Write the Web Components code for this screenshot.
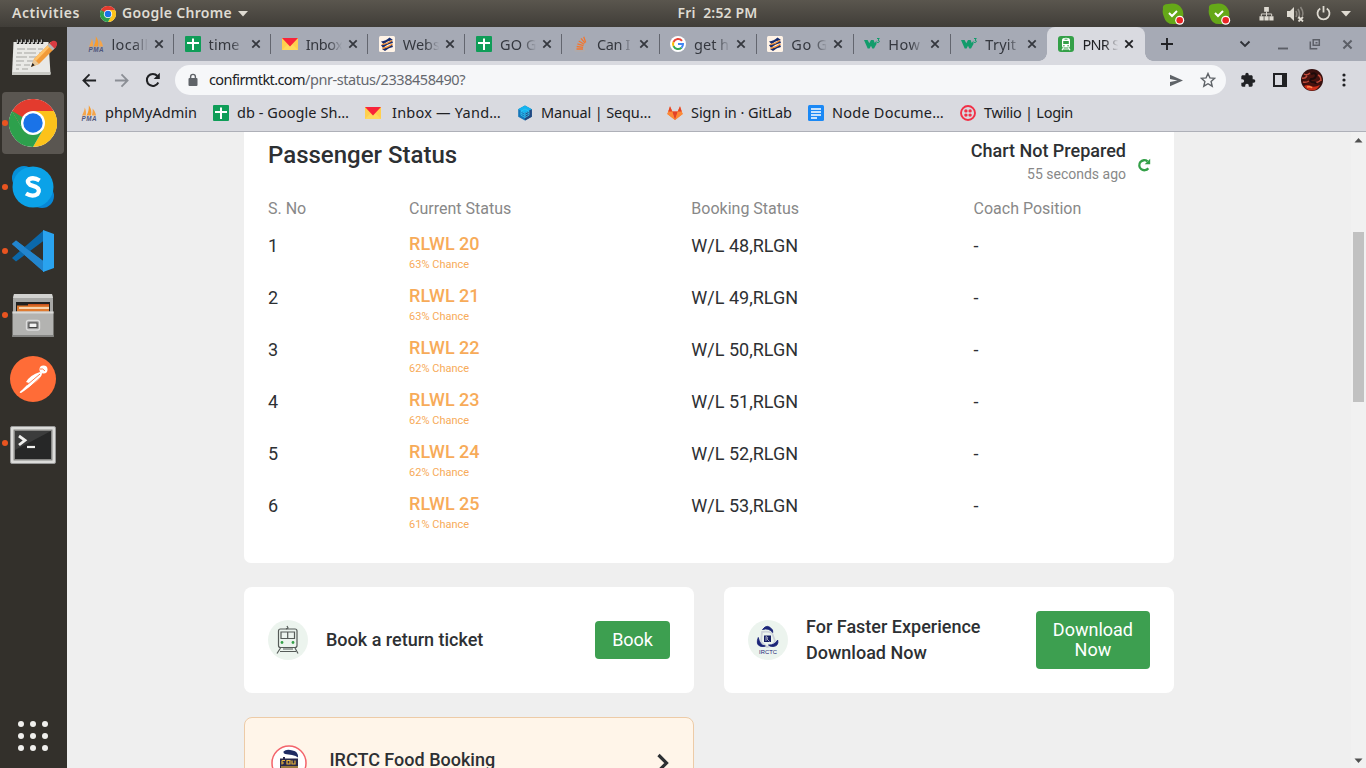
<!DOCTYPE html>
<html lang="en">
<head>
<meta charset="utf-8">
<title>PNR Status</title>
<style>
html,body{margin:0;height:100%;overflow:hidden}
body{background:#efefef;font-family:Roboto,"Noto Sans",sans-serif}
</style>
</head>
<body>
<desktop-shell></desktop-shell>
<script>
const G = {
chrome:['0 0 48 48','<circle cx="24" cy="24" r="24" fill="#fff"/><path d="M34.4 30L24 48A24 24 0 0 0 44.8 12H24z" fill="#fcc21b"/><path d="M13.6 30L3.2 12A24 24 0 0 0 24 48l10.4-18z" fill="#2da04c"/><path d="M3.2 12H24L13.6 30z" fill="#2da04c"/><path d="M24 12H3.2A24 24 0 0 1 44.8 12z" fill="#e33b2e"/><path d="M3.2 12L9 22l15-10z" fill="#e33b2e"/><path d="M3.2 12L13.600 30l3-10z" fill="#2da04c"/><circle cx="24" cy="24" r="12" fill="#fff"/><circle cx="24" cy="24" r="9.7" fill="#1a73e8"/>'],
pma:['0 0 16 16','<path d="M1 10.5C2.500 8 3.500 5 3.800 2.500 5 5 5.300 8 4.800 10.500z" fill="#f5a54a"/><path d="M5.500 10.500C7.500 7 8 4 7.800.3 10.500 4 10.800 7.500 10 10.500z" fill="#f89c2e"/><path d="M10.700 10.500C11.700 8 11.800 5.500 11.500 3.500 14 6 14.800 8.500 15 10.500z" fill="#f5a54a"/><text x="8" y="16" font-family="Liberation Sans,sans-serif" font-size="6.300" font-weight="bold" font-style="italic" text-anchor="middle" textLength="15" fill="#50567c">PMA</text>'],
sheets:['0 0 16 16','<rect width="16" height="16" rx="1" fill="#0f9d58"/><path d="M7 2.500h2V6h5v2H9v6H7V8H2V6h5z" fill="#fff"/>'],
mail:['0 0 16 16','<path d="M0 2h16v12H0z" fill="#ffcf4d"/><path d="M0 14l6-6h4l6 6z" fill="#ffd95c"/><path d="M0 2h16L8 10.500z" fill="#f8233a"/>'],
stripe:['0 0 16 16','<rect width="16" height="16" rx="1.500" fill="#fff3e6"/><path d="M2 5.500Q7 5 10.500 1.500L14 4Q9 4.500 4.500 8z" fill="#182c6d"/><path d="M2 9Q9 8 13 4.500L14 7Q8 8 4 12z" fill="#182c6d"/><path d="M3 13Q9 12 13 8.500L14 11Q10 11.500 6 15z" fill="#182c6d"/><path d="M3 8.700Q8 8 13 4.500M3.500 12.500Q9 11.500 13.500 8" stroke="#f28c30" stroke-width="1.300" fill="none"/>'],
stack:['0 0 16 16','<path d="M2 10.500v4.500h9.500v-4.500" fill="none" stroke="#b3aaa6" stroke-width="1"/><path d="M3.500 13h6.500M3.700 10.500l6.400.8M4.400 7.800l6.100 1.900M5.700 5l5.400 3.300M8 2.400l4 4.800M10.700.8l2 5.600" stroke="#f3772f" stroke-width="1.300"/>'],
google:['0 0 16 16','<circle cx="8" cy="8" r="8" fill="#fff"/><path d="M12 4.800A5 5 0 0 0 3.500 6" fill="none" stroke="#ea4335" stroke-width="2"/><path d="M3.500 6a5 5 0 0 0 0 4.200" fill="none" stroke="#fbbc05" stroke-width="2"/><path d="M3.500 10.200a5 5 0 0 0 8 1.500" fill="none" stroke="#34a853" stroke-width="2"/><path d="M8 8h5a5 5 0 0 1-1.500 3.700" fill="none" stroke="#4285f4" stroke-width="2"/>'],
w3:['0 0 16 16','<path d="M0 4h3.600l1.700 3.200L7 4h2.600l1.200 3 1.700-2.500L12.500 8 10 12.500H8.300L7 9.800 5.600 12.500H3.700z" fill="#129c6b"/><path d="M13 2.500h2.300L14 4.200q1.700.2 1.200 1.800-.8 1-2.200.3" fill="none" stroke="#129c6b"/>'],
train:['0 0 16 16','<rect width="16" height="16" rx="3" fill="#34a048"/><path d="M5 2.300q3-1 6 0 1 .5 1 2V10q0 1.500-1.500 1.500h-5Q4 11.500 4 10V4q0-1.300 1-1.700z" fill="#fff"/><path d="M5.200 5h5.600v3H5.200z" fill="#34a048"/><path d="M6.500 3.200h3" stroke="#34a048" stroke-width=".9"/><circle cx="5.900" cy="9.700" r=".8" fill="#34a048"/><circle cx="10.100" cy="9.700" r=".8" fill="#34a048"/><path d="M5.500 11.500L4 14.300M10.500 11.500l1.500 2.800M5 13h6" stroke="#fff" stroke-width="1.100"/>'],
seq:['0 0 16 16','<path d="M8 .5l6.800 3.700v7.600L8 15.500 1.200 11.800V4.200z" fill="#1576b9"/><path d="M8 .5l6.800 3.700L8 8 1.200 4.200z" fill="#15b4ef"/><path d="M8 8v7.500l6.800-3.700V4.200z" fill="#24477f"/><path d="M4 6.200l4-2.200 4 2.200v4L8 12.500l-4-2.300zM4 6.200l4 2.200 4-2.200M8 8.400v4M4 8.200l4 2.200 4-2.200" fill="none" stroke="#31c4f5" stroke-width=".8"/>'],
gitlab:['0 0 16 16','<path d="M8 15L.3 9 3 1.200 5.500 6.500h5L13 1.200 15.700 9z" fill="#fc7c36"/><path d="M8 15L5.200 6.500h5.600z" fill="#e24329"/><path d="M.3 9L1.500 6.500h3.700L8 15zM15.700 9l-1.200-2.500h-3.700L8 15z" fill="#fc8a38"/><path d="M3 1.200l2.200 5.300H1.300zM13 1.200l-2.200 5.300h3.900z" fill="#e24329"/>'],
docs:['0 0 16 16','<rect width="16" height="16" rx="1.500" fill="#1a88f5"/><path d="M3 4h10M3 7h10M3 10h10M3 13h6" stroke="#fff" stroke-width="1.500"/>'],
twilio:['0 0 16 16','<circle cx="8" cy="8" r="7" fill="none" stroke="#f22f46" stroke-width="1.900"/><g fill="#f22f46"><circle cx="5.900" cy="5.900" r="1.700"/><circle cx="10.100" cy="5.900" r="1.700"/><circle cx="5.900" cy="10.100" r="1.700"/><circle cx="10.100" cy="10.100" r="1.700"/></g>'],
close:['0 0 10 10','<path d="M1.300 1.300l7.400 7.400M8.700 1.300L1.300 8.700" stroke="currentColor" stroke-width="1.800"/>'],
plus:['0 0 12 12','<path d="M6 0v12M0 6h12" stroke="#202124" stroke-width="1.900"/>'],
chev:['0 0 12 12','<path d="M1.500 3.500L6 8l4.500-4.500" fill="none" stroke="#303238" stroke-width="1.900"/>'],
mini:['0 0 12 12','<path d="M1 10.500h10" stroke="#5c5f67" stroke-width="1.900"/>'],
restore:['0 0 12 12','<path d="M4.200 1.700h6.100v5.600H4.200zM1.300 3.500v7.200h7" fill="none" stroke="#5c5f67" stroke-width="1.500"/><path d="M6.500 4h2v1.500h-2z" fill="#5c5f67"/>'],
back:['0 0 16 16','<path d="M15 8H2M8 1.500L1.500 8 8 14.500" fill="none" stroke="#202124" stroke-width="1.900"/>'],
fwd:['0 0 16 16','<path d="M1 8h13M8 1.500L14.500 8 8 14.500" fill="none" stroke="#8b8e95" stroke-width="1.900"/>'],
reload:['0 0 16 16','<path d="M13.300 10.500A6 6 0 1 1 12.400 4" fill="none" stroke="#202124" stroke-width="2"/><path d="M14.800.8v6.100H8.700z" fill="#202124"/>'],
lock:['0 0 12 14','<rect x="1.500" y="5" width="9" height="8" rx="1" fill="#5f6368"/><path d="M3.600 5.500V3.800a2.400 2.400 0 0 1 4.800 0v1.700" fill="none" stroke="#5f6368" stroke-width="1.400"/>'],
send:['0 0 16 14','<path d="M1 .8L15 7 1 13.200V8.500L9 7 1 5.500z" fill="#5f6368"/>'],
star:['0 0 16 16','<path d="M8 1.500l1.900 4.400 4.800.4-3.600 3.200 1.100 4.700L8 11.700l-4.200 2.500 1.100-4.700L1.300 6.300l4.800-.4z" fill="none" stroke="#5f6368" stroke-width="1.400"/>'],
puzzle:['0 0 24 24','<path d="M20.500 11H19V7c0-1.100-.9-2-2-2h-4V3.500a2.500 2.500 0 0 0-5 0V5H4c-1.100 0-2 .9-2 2v3.800h1.500a2.700 2.700 0 0 1 0 5.400H2V20c0 1.100.9 2 2 2h3.800v-1.500a2.700 2.700 0 0 1 5.400 0V22H17c1.100 0 2-.9 2-2v-4h1.500a2.500 2.500 0 0 0 0-5z" fill="#202124"/>'],
panel:['0 0 14 14','<path d="M1 1h12v12H1z" fill="none" stroke="#202124" stroke-width="2"/><path d="M9 1h4v12H9z" fill="#202124"/>'],
avatar:['0 0 22 22','<defs><radialGradient id="g"><stop stop-color="#57150f"/><stop offset="1" stop-color="#34100f"/></radialGradient></defs><circle cx="11" cy="11" r="11" fill="url(#g)"/><path d="M3 5q3 2 6-1M1 9q3 1 5-2M2 13q3 1 6-1M17 6q3 1 3 6M14 14q4-1 6-3" fill="none" stroke="#c04a3a" stroke-width="1.500"/><path d="M10 5q4-2 5 1 0 4-5 4-2 2 1 3 4 0 4 2" fill="none" stroke="#1d0b0b" stroke-width="2"/><path d="M3 17q4-2 7 0t9-1q-3 5.500-8 5.500T3 17z" fill="#cf2f19"/><path d="M6 18q4-1 5 1" stroke="#ff8a4f" stroke-width="1.500" fill="none"/>'],
dots:['0 0 4 14','<g fill="#202124"><circle cx="2" cy="2" r="1.600"/><circle cx="2" cy="7" r="1.600"/><circle cx="2" cy="12" r="1.600"/></g>'],
tray:['0 0 23 22','<path d="M1 6Q0 1 6 1q10-2 14 5 2 3 1 8 1 8-8 7Q4 22 2 14 0 10 1 6z" fill="#65a818"/><path d="M7 10l3 3 5-5" fill="none" stroke="#fff" stroke-width="2"/><circle cx="17.700" cy="17.300" r="4.500" fill="#fff"/><circle cx="17.700" cy="17.300" r="3.300" fill="#ea2626"/>'],
net:['0 0 16 16','<path d="M5.500 1h5v5h-5zM.5 11h4.500v4.500H.5zM5.800 11h4.500v4.500H5.800zM11 11h4.500v4.500H11z" fill="#dfdbd2"/><path d="M8 6v5M2.500 11V8.500h11V11" fill="none" stroke="#dfdbd2"/>'],
vol:['0 0 17 16','<path d="M0 5h3l4-4v14L3 11H0z" fill="#dfdbd2"/><path d="M9 5q1.500 3 0 6M11 3q3 5 0 10M13.500 1q3.500 5 1.800 9" fill="none" stroke="#89857e" stroke-width="1.600"/><path d="M11.500 11l4.500 4.500M16 11l-4.500 4.500" stroke="#dfdbd2" stroke-width="1.800"/>'],
power:['0 0 16 16','<path d="M4.500 2.600a6.400 6.400 0 1 0 7 0M8 0v7" fill="none" stroke="#dfdbd2" stroke-width="1.900"/>'],
caret:['0 0 10 6','<path d="M0 0h10L5 5.500z" fill="#dfdbd2"/>'],
notes:['0 0 48 40','<path d="M4.500 4h35l2 32H3z" fill="#e9e9e6"/><path d="M3 34h38.500v3H3z" fill="#c9c9c4"/><path d="M8 11h8m2 0h9m2 0h5M8 15h5m2 0h12m3 0h3M7 19h11m2 0h8M7 23h8m3 0h6M7 27h5m3 0h6M7 31h3m3 0h6" stroke="#a5a5a1" stroke-width="1"/><path d="M9 6V1m4 5V1m4 5V1m4 5V1m4 5V1m4 5V1m4 5V1" stroke="#222" stroke-width="2.400"/><path d="M8.300 5V1.500m4 3.500V1.500m4 3.500V1.500m4 3.500V1.500m4 3.500V1.500m4 3.500V1.500m4 3.500V1.500" stroke="#d8d8d4" stroke-width="1"/><path d="M22 29l3-8L42 4l5 5-17 17z" fill="#f19a39"/><path d="M25 21L42 4l1.800 1.800L27 23z" fill="#ffc268"/><path d="M22 29l3-8 5 5z" fill="#e9c99a"/><path d="M22 29l1.500-4 2.200 2.200z" fill="#222"/><path d="M40 6l3-3q3-1 4.500 1T47 9l-2 2z" fill="#d83b42"/><path d="M38.500 7.500l2-2 5 5-2 2z" fill="#b5b5b5"/>'],
skype:['0 0 44 44','<circle cx="13" cy="13" r="12" fill="#078fd8"/><circle cx="31" cy="31" r="12" fill="#0786d5"/><circle cx="22" cy="22" r="20.500" fill="#0ba2e8"/><path d="M28.600 15.500Q23 12 18.500 14q-3.500 3 .5 5.700l5.500 2Q30 24.500 26.500 29q-5 3.500-11.500-.5" fill="none" stroke="#fff" stroke-width="4.300"/>'],
code:['0 0 44 44','<path d="M1 15l4-3.500L35 34l-2 9z" fill="#1f8ad2"/><path d="M1 29l4 3.500L35 10l-2-9z" fill="#0b68aa"/><path d="M1 15l4-3.500L33 33v10z" fill="#2285ce"/><path d="M32 1l11 4v34l-11 4z" fill="#2aa3ef"/>'],
files:['0 0 44 46','<path d="M3 2h38l1 5v34H2V7z" fill="#a8a8a6"/><path d="M3 2h38l1 4H2z" fill="#d2d2d0"/><path d="M5 10h34v11H5z" fill="#202020"/><path d="M17 12h21v9H17z" fill="#c8521d"/><path d="M6 13.500h32v6.500H6z" fill="#e07b30"/><path d="M8 16h30" stroke="#fff0d8" stroke-width="1.500"/><path d="M1.500 19.500h41V45h-41z" fill="#b3b3b1"/><path d="M1.500 19.500h41v2h-41z" fill="#d9d9d7"/><path d="M1.500 43h41v2h-41z" fill="#858583"/><rect x="15.500" y="28.500" width="13" height="9.500" rx="2" fill="#999" stroke="#ddd" stroke-width="1.400"/><rect x="18" y="31" width="8" height="4.500" fill="#f4f4f4" stroke="#444"/>'],
postman:['0 0 46 46','<circle cx="23" cy="23" r="23" fill="#ff6c37"/><circle cx="33.500" cy="13.500" r="4" fill="#fff"/><path d="M30 16q-10 3-14 10l3 1-7 7q-4 3-1 3l3-2 8-6 5-4q5-4 5-8z" fill="#fff"/><path d="M30 18L17 29M33 19L20 31M30 13q3-1 5 2" stroke="#ff6c37" stroke-width=".9" fill="none"/>'],
term:['0 0 46 38','<rect x=".5" y=".5" width="45" height="37" rx="1.500" fill="#dcdcda" stroke="#999"/><path d="M3.500 3.500h39v31h-39z" fill="#878785"/><path d="M5 5h36v28H5z" fill="#262727"/><path d="M5 5h36L5 24z" fill="#3b3c3c"/><path d="M9 10l6 4.300L9 19" fill="none" stroke="#f0f0ee" stroke-width="2.800"/><path d="M17 21h8" stroke="#f0f0ee" stroke-width="2.200"/>'],
grid:['0 0 30 30','<g fill="#f0efed"><circle cx="3" cy="3" r="3"/><circle cx="15" cy="3" r="3"/><circle cx="27" cy="3" r="3"/><circle cx="3" cy="15" r="3"/><circle cx="15" cy="15" r="3"/><circle cx="27" cy="15" r="3"/><circle cx="3" cy="27" r="3"/><circle cx="15" cy="27" r="3"/><circle cx="27" cy="27" r="3"/></g>'],
refresh:['0 0 14 14','<path d="M11.300 10.200A5 5 0 1 1 10.500 3.400" fill="none" stroke="#34a048" stroke-width="2.300"/><path d="M13.200.8v5.500H7.700z" fill="#34a048"/>'],
rail:['0 0 40 40','<circle cx="20" cy="20" r="20" fill="#ecf4ee"/><g fill="none" stroke="#555b58" stroke-width="1.200"><rect x="10.500" y="9" width="18.500" height="18.500" rx="2"/><path d="M13 12h13.500v6.500H13zM19.700 12v6.500M18 9l2-1-1-2M12.500 28L9 33.500M27 28l3 5.500M12 31.500h16M15 29h10"/></g><g fill="#34a048"><circle cx="14" cy="22.500" r="1.400"/><circle cx="25" cy="22.500" r="1.400"/></g>'],
irctc:['0 0 40 40','<circle cx="20" cy="20" r="20" fill="#ecf4ee"/><path d="M14 12q5-1 10 1l3 8q-2 5-8 6l-6-5z" fill="none" stroke="#cdd2d9" stroke-width="1.800"/><path d="M14.500 9.500q5-6.500 10 .5l.3 2.500q-4-5-10.300-3zM10.300 17.500q-2.800 7 2 8.700 3 .8 5-.2-5.500-.5-7-8.500zM29.700 20q1.300 6-4.700 6.500-3 0-4.500-1.500 6 .5 9.200-5z" fill="#1b2578" stroke="#1b2578" stroke-width=".9"/><path d="M16 15.500h7V22h-7z" fill="#151d63"/><path d="M18 21v-4.500q3 1 1 2.500l2.500 2.500" stroke="#fff" stroke-width=".6" fill="none"/><text x="20" y="33.500" text-anchor="middle" textLength="18" font-family="Liberation Sans,sans-serif" font-size="5.800" fill="#1b2578">IRCTC</text>'],
food:['0 0 36 36','<circle cx="18" cy="18" r="17" fill="#fff" stroke="#f3646b" stroke-width="1.500"/><path d="M12.500 6.500q3-3 9-1 6 1 5.500 7-2-2-6-2.500l-7-1q-2-1-1.500-2.500z" fill="#1f2c62"/><path d="M9 13.500h3v-1.500h2v1.500h13v14H9z" fill="#28284a"/><path d="M11 15.500h3M11 18h2M11 15.500v4M16 15.500h3v3.500h-3zM21 15.500v3.500h3v-3.500" fill="none" stroke="#e7b43b" stroke-width="1.200"/><path d="M10 22h17" stroke="#e7b43b" stroke-width="1.200"/>'],
next:['0 0 14 20','<path d="M2.500 2l8 8-8 8" fill="none" stroke="#2d3033" stroke-width="3.200"/>']
};
const define = (name, html, setup) => customElements.define(name, class extends HTMLElement {
  connectedCallback() {
    if (this.shadowRoot) return;
    this.attachShadow({mode: 'open'}).innerHTML = typeof html === 'function' ? html(this) : html;
    if (setup) setup(this);
  }
});
/* <ui-icon name w h> */
define('ui-icon', e => {
  const [vb, body] = G[e.getAttribute('name')];
  const w = e.getAttribute('w') || 16, h = e.getAttribute('h') || w;
  return `<style>:host{display:block;flex:none;width:${w}px;height:${h}px}svg{display:block}</style><svg width="${w}" height="${h}" viewBox="${vb}">${body}</svg>`;
});
/* <ui-label w> tracks its letters so that the label takes w pixels */
define('ui-label', '<style>:host{display:block;flex:none;white-space:pre}span{display:inline-block}</style><span><slot></slot></span>', e => {
  const w = +e.getAttribute('w');
  if (!w) return;
  const s = e.shadowRoot.querySelector('span');
  s.style.letterSpacing = ((w - s.getBoundingClientRect().width) / e.textContent.length) + 'px';
  e.style.width = w + 'px';
});
define('top-bar', `<style>
:host{display:flex;height:27px;background:linear-gradient(#5a564e,#403d38);color:#dfdbd2;font:600 14px/26px "Noto Sans",sans-serif;box-sizing:border-box;align-items:center}
.l,.r{flex:1;display:flex;align-items:center}.l{padding-left:12px}.r{justify-content:flex-end;padding-right:15px}ui-label{margin-top:-1px}
</style><div class="l"><ui-label w="68">Activities</ui-label><ui-icon name="chrome" w="16" style="margin:0 6px 0 20px"></ui-icon><ui-label w="110">Google Chrome</ui-label><ui-icon name="caret" w="10" h="6" style="margin-left:6px"></ui-icon></div>
<ui-label w="80" style="margin-right:-68px;margin-left:4px">Fri  2:52 PM</ui-label>
<div class="r"><ui-icon name="tray" w="23" h="22"></ui-icon><ui-icon name="tray" w="23" h="22" style="margin-left:23px"></ui-icon><ui-icon name="net" w="15" style="margin-left:28px"></ui-icon><ui-icon name="vol" w="17" h="16" style="margin-left:13px"></ui-icon><ui-icon name="power" w="15" style="margin-left:12px"></ui-icon><ui-icon name="caret" w="10" h="6" style="margin-left:10px"></ui-icon></div>`);
define('dock-item', e => `<style>:host{display:flex;width:62px;height:62px;align-items:center;justify-content:center;border-radius:4px;position:relative}
:host([active]){background:#5a5651}:host([running])::before{content:"";position:absolute;left:0;top:28px;width:6px;height:6px;border-radius:3px;background:#e95420}</style><slot></slot>`);
define('app-dock', `<style>:host{display:flex;flex-direction:column;gap:2px;box-sizing:border-box;width:67px;background:#33302b;padding:1px 0 17px 2px}.s{flex:1}.g{padding-left:16px}</style>
<dock-item><ui-icon name="notes" w="48" h="40" style="margin-bottom:3px"></ui-icon></dock-item>
<dock-item active running><ui-icon name="chrome" w="48"></ui-icon></dock-item>
<dock-item running><ui-icon name="skype" w="44"></ui-icon></dock-item>
<dock-item running><ui-icon name="code" w="44"></ui-icon></dock-item>
<dock-item running><ui-icon name="files" w="44" h="46"></ui-icon></dock-item>
<dock-item><ui-icon name="postman" w="46"></ui-icon></dock-item>
<dock-item running><ui-icon name="term" w="46" h="38" style="margin-top:3px"></ui-icon></dock-item>
<div class="s"></div><div class="g"><ui-icon name="grid" w="30"></ui-icon></div>`);
define('browser-tab', e => `<style>
:host{display:flex;flex:none;align-items:center;box-sizing:border-box;width:97.1px;height:34px;padding-left:11px;position:relative;color:#35383f}
.t{width:37px;margin-left:8px;-webkit-mask:linear-gradient(90deg,#000 60%,transparent 98%);mask:linear-gradient(90deg,#000 60%,transparent 98%)}
ui-icon.x{margin-left:5px}
:host(:not([active]):not([last]))::after{content:"";position:absolute;right:-.5px;top:7px;width:1px;height:20px;background:#63666f}
:host([active]){background:#d9dae0;border-radius:8px 8px 0 0;color:#202124}
:host([active])::before,:host([active])::after{content:"";position:absolute;bottom:0;width:8px;height:8px}
:host([active])::before{left:-8px;background:radial-gradient(circle at 0 0,transparent 7.5px,#d9dae0 8px)}
:host([active])::after{right:-8px;background:radial-gradient(circle at 100% 0,transparent 7.5px,#d9dae0 8px)}
</style><ui-icon name="${e.getAttribute('icon')}"></ui-icon><div class="t"><ui-label w="${e.getAttribute('w')}">${e.getAttribute('label')}</ui-label></div><ui-icon class="x" name="close" w="10"></ui-icon>`);
const tabs = [['pma','locall',37],['sheets','time',31],['mail','Inbox',37],['stripe','Webs',37],['sheets','GO G',37],['stack','Can I',33],['google','get h',35],['stripe','Go G',37],['w3','How',32],['w3','Tryit',31],['train','PNR S',37]];
define('tab-strip', `<style>:host{display:flex;height:34px;background:#a6aab5;font:14.5px/32px "Noto Sans",sans-serif;padding-left:9.5px;align-items:center;color:#5c5f67}.s{flex:1}</style>
${tabs.map((t,i)=>`<browser-tab icon="${t[0]}" label="${t[1]}" w="${t[2]}" ${i==10?'active':i==9?'last':''}></browser-tab>`).join('')}
<ui-icon name="plus" w="12" style="margin-left:16px"></ui-icon><div class="s"></div>
<ui-icon name="chev" w="12" style="margin-right:26px"></ui-icon><ui-icon name="mini" w="12" style="margin-right:20px"></ui-icon><ui-icon name="restore" w="12" style="margin-right:21px"></ui-icon><ui-icon name="close" w="11" style="margin-right:13px"></ui-icon>`);
define('address-bar', `<style>:host{display:flex;height:38px;align-items:center;padding:0 6px;background:#d9dae0;font:14.500px/28px "Noto Sans",sans-serif}
.c{width:32px;display:flex;justify-content:center;flex:none}.o{flex:1;height:30px;border-radius:15px;background:#f6f7f9;display:flex;align-items:center;margin:0 6px;color:#202124}.s{flex:1}.p{color:#65686e}ui-label{margin-top:-2px}</style>
<div class="c"><ui-icon name="back" w="15"></ui-icon></div><div class="c"><ui-icon name="fwd" w="15"></ui-icon></div><div class="c"><ui-icon name="reload" w="16"></ui-icon></div>
<div class="o"><ui-icon name="lock" w="12" h="14" style="margin:0 10px 0 12px"></ui-icon><ui-label w="96">confirmtkt.com</ui-label><ui-label class="p" w="160">/pnr-status/2338458490?</ui-label><div class="s"></div><div class="c"><ui-icon name="send" w="15" h="13"></ui-icon></div><div class="c" style="margin-right:2px"><ui-icon name="star" w="16"></ui-icon></div></div>
<div class="c"><ui-icon name="puzzle" w="16"></ui-icon></div><div class="c"><ui-icon name="panel" w="14"></ui-icon></div><div class="c"><ui-icon name="avatar" w="22"></ui-icon></div><div class="c"><ui-icon name="dots" w="4" h="14"></ui-icon></div>`);
const marks = [['pma','phpMyAdmin',92],['sheets','db - Google Sh…',112],['mail','Inbox — Yand…',109,3],['seq','Manual | Sequ…',110],['gitlab','Sign in · GitLab',101],['docs','Node Docume…',112],['twilio','Twilio | Login',89]];
define('bookmark-bar', `<style>:host{display:flex;box-sizing:border-box;height:33px;align-items:center;gap:16px;padding:0 0 5px 14px;background:#d9dae0;border-bottom:1px solid #aeb0b8;color:#202124;font:14.500px/24px "Noto Sans",sans-serif}.m{display:flex;align-items:center;gap:8px;height:26px}ui-label{margin-top:-1px}</style>
${marks.map(m=>`<div class="m"><ui-icon name="${m[0]}"></ui-icon><ui-label w="${m[2]}" style="margin-left:${m[3]||0}px">${m[1]}</ui-label></div>`).join('')}`);
define('passenger-row', e => `<style>:host{display:grid;grid-template-columns:16% 32% 32% 20%;height:52px;font-size:18px;line-height:26px;color:#2d3033}
b{display:block;font-weight:500;line-height:22px;color:#f7ab59}small{display:block;font-size:11px;line-height:20px;color:#f7ab59}</style>
<div>${e.getAttribute('no')}</div><div><b>RLWL ${e.getAttribute('wl')}</b><small>${e.getAttribute('chance')}% Chance</small></div><div>W/L ${e.getAttribute('bk')},RLGN</div><div>-</div>`);
define('passenger-card', `<style>:host{display:block;box-sizing:border-box;height:431px;background:#fff;border-radius:0 0 7px 7px;padding:6px 24px 0;color:#2d3033}
.h{display:flex;justify-content:space-between;height:61px}h2{margin:0;font:500 24px/34px Roboto,sans-serif}.r{display:flex;text-align:right}.r b{display:block;font:500 18px/26px Roboto,sans-serif}.r small{display:block;font-size:14px;line-height:20px;color:#888}
.c{display:grid;grid-template-columns:16% 32% 32% 20%;font-size:16px;line-height:20px;height:34px;color:#888}</style>
<div class="h"><h2>Passenger Status</h2><div class="r"><div><b>Chart Not Prepared</b><small>55 seconds ago</small></div><ui-icon name="refresh" w="14" style="margin:20px -1px 0 11px"></ui-icon></div></div>
<div class="c"><div>S. No</div><div>Current Status</div><div>Booking Status</div><div>Coach Position</div></div>
${[63,63,62,62,62,61].map((c,i)=>`<passenger-row no="${i+1}" wl="${20+i}" bk="${48+i}" chance="${c}"></passenger-row>`).join('')}`);
define('promo-card', `<style>:host{display:flex;box-sizing:border-box;height:106px;width:450px;align-items:center;background:#fff;border-radius:8px;padding:0 24px;font:500 18px/26px Roboto,sans-serif;color:#2d3033}
:host([warm]){background:#fff5e9;border:1px solid #edcba7;height:92px;padding:0 23px 0 26px}
.t{flex:1;margin-left:18px}:host([warm]) .t{margin-left:22.500px}
::slotted(button){border:0;border-radius:4px;background:#3d9f50;color:#fff;font:400 18px/20px Roboto,sans-serif;padding:9px 17px;margin:0}</style>
<slot name="icon"></slot><div class="t"><slot></slot></div><slot name="action"></slot>`);
define('scroll-bar', `<style>:host{display:flex;flex-direction:column;align-items:center;width:15px;background:#f1f1f1;justify-content:space-between}svg{display:block}.k{width:11px;height:170px;background:#c1c1c1;margin:88px 0 0 0}.s{flex:1}</style>
<svg width="15" height="12"><path d="M3.500 10.500h8L7.500 6z" fill="#505050"/></svg><div class="k"></div><div class="s"></div><svg width="15" height="14"><path d="M3.500 4.500h8l-4 4.500z" fill="#505050"/></svg>`);
define('page-view', `<style>:host{display:flex;flex:1;min-height:0;overflow:hidden;background:#efefef;font-family:Roboto,sans-serif}.m{flex:1;display:flex;justify-content:center}.w{width:930px;display:grid;grid-template-columns:450px 450px;gap:24px 30px;align-content:start}passenger-card{grid-column:1/3}</style>
<div class="m"><div class="w"><passenger-card></passenger-card>
<promo-card><ui-icon slot="icon" name="rail" w="40"></ui-icon>Book a return ticket<button slot="action">Book</button></promo-card>
<promo-card><ui-icon slot="icon" name="irctc" w="40"></ui-icon>For Faster Experience<br>Download Now<button slot="action">Download<br>Now</button></promo-card>
<promo-card warm><ui-icon slot="icon" name="food" w="36"></ui-icon><span style="display:block;margin-top:-6px">IRCTC Food Booking</span><ui-icon slot="action" name="next" w="14" h="20"></ui-icon></promo-card></div></div><scroll-bar></scroll-bar>`);
define('desktop-shell', `<style>:host{display:flex;flex-direction:column;width:1366px;height:768px;overflow:hidden}.b{display:flex;flex:1;min-height:0}.w{display:flex;flex-direction:column;flex:1;min-width:0}</style>
<top-bar></top-bar><div class="b"><app-dock></app-dock><div class="w"><tab-strip></tab-strip><address-bar></address-bar><bookmark-bar></bookmark-bar><page-view></page-view></div></div>`);
</script>
</body>
</html>
